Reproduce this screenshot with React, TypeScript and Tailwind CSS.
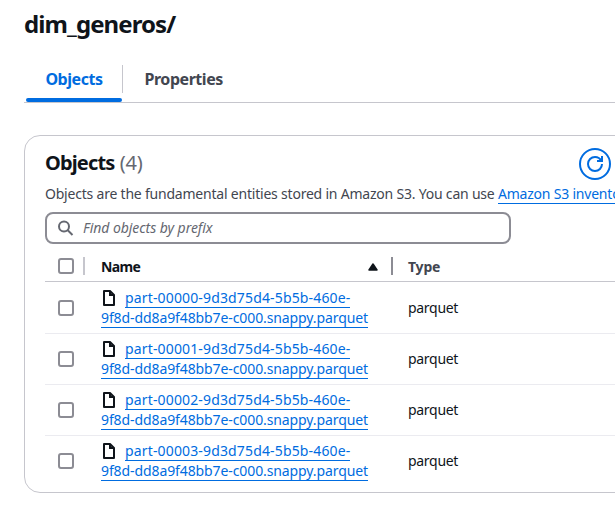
import React from "react";

const files = ["00000", "00001", "00002", "00003"];

function Checkbox() {
  return <span className="block h-4 w-4 shrink-0 rounded-[3px] border-2 border-[#8c8c94] bg-white" />;
}

function FileIcon() {
  return (
    <svg className="ml-[2px] mt-[1px] h-4 w-3 shrink-0" viewBox="0 0 12 16" fill="none" stroke="#0f141a" strokeWidth="2">
      <path d="M1 1H7L11 5V15H1Z" strokeLinejoin="round" />
      <path d="M7 1V5H11" />
    </svg>
  );
}

function Row({ id }: { id: string }) {
  return (
    <div className="flex h-[51px] items-center border-b border-[#ebebf0] pl-[13px] last:h-[50px] last:border-b-0">
      <Checkbox />
      <div className="ml-[27px] h-[39px] w-[307px] text-[14px] leading-5 text-[#006ce0]">
        <div className="flex h-5 items-start">
          <FileIcon />
          <span className="ml-[10px] h-[19px] whitespace-nowrap border-b border-[#006ce0] leading-[17px] tracking-[0.15px]">
            part-{id}-9d3d75d4-5b5b-460e-
          </span>
        </div>
        <div className="flex h-5">
          <span className="h-[19px] whitespace-nowrap border-b border-[#006ce0] leading-[17px] tracking-[-0.1px]">
            9f8d-dd8a9f48bb7e-c000.snappy.parquet
          </span>
        </div>
      </div>
      <span className="pb-[2px] text-[14px] tracking-[-0.3px] text-[#0f141a]">parquet</span>
    </div>
  );
}

export default function App() {
  return (
    <main className="h-[522px] w-[615px] overflow-hidden bg-white pl-6 font-['Noto_Sans','Open_Sans',sans-serif] text-[#0f141a]">
      <h1 className="h-[65px] pt-[9px] text-[24px] font-bold leading-[30px] tracking-[-0.92px]">dim_generos/</h1>
      <nav className="flex h-[38px] w-[640px] border-b border-[#c6c6cd]">
        <div className="ml-[2px] flex h-[37px] w-24 flex-col justify-between text-center text-[16px] font-bold text-[#006ce0]">
          <span className="h-7 leading-[29px] tracking-[-0.45px]">Objects</span>
          <span className="h-1 rounded-[2px] bg-[#006ce0]" />
        </div>
        <span className="h-7 w-px bg-[#c6c6cd]" />
        <span className="ml-[21.5px] h-7 text-[16px] font-bold leading-[29px] tracking-[-0.46px] text-[#424650]">Properties</span>
      </nav>
      <section className="mt-8 h-[358px] w-[640px] rounded-2xl border border-[#c6c6cd] pl-5">
        <header className="flex h-[49px] w-[566px] justify-between">
          <h2 className="pt-3 text-[20px] font-bold leading-[30px] tracking-[-0.85px]">
            Objects <span className="ml-px font-normal tracking-[-0.3px] text-[#656871]">(4)</span>
          </h2>
          <span className="mt-3 flex h-8 w-8 items-center justify-center rounded-full border-2 border-[#006ce0] text-[#006ce0]">
            <svg className="h-4 w-4" viewBox="0 0 16 16" fill="none" stroke="currentColor" strokeWidth="2">
              <path d="M15 8c0 3.87-3.13 7-7 7s-7-3.13-7-7 3.13-7 7-7c2.79 0 5.2 1.63 6.33 4" />
              <path d="M10 5H15V0" />
            </svg>
          </span>
        </header>
        <p className="h-[27px] whitespace-nowrap text-[14px] leading-[18px] tracking-[-0.21px] text-[#424650]">
          Objects are the fundamental entities stored in Amazon S3. You can use{" "}
          <span className="inline-block h-[19px] border-b border-[#006ce0] align-top text-[#006ce0]">Amazon S3 inventory</span>
        </p>
        <div className="flex h-8 w-[466px] items-center rounded-lg border-2 border-[#8c8c94] pl-[11px]">
          <svg className="h-4 w-4" viewBox="0 0 16 16" fill="none" stroke="#656871" strokeWidth="2">
            <circle cx="6" cy="6.5" r="5" />
            <path d="M9.5 10L14.5 15" />
          </svg>
          <span className="-mt-px ml-[9px] text-[14px] italic tracking-[-0.05px] text-[#656871]">Find objects by prefix</span>
        </div>
        <div className="mt-[5px] flex h-[33px] items-center border-b border-[#c6c6cd] pl-[13px] pt-[2px] text-[14px] font-bold">
          <Checkbox />
          <span className="ml-[9px] h-[18px] w-[2px] bg-[#c6c6cd]" />
          <span className="ml-4 w-[267px] tracking-[-0.65px]">Name</span>
          <svg className="mt-px h-2 w-[10px]" viewBox="0 0 10 8">
            <path d="M5 1L9 7H1Z" fill="#0f141a" stroke="#0f141a" strokeWidth="1.5" strokeLinejoin="round" />
          </svg>
          <span className="ml-[13px] h-[18px] w-[2px] bg-[#8c8c94]" />
          <span className="ml-[15px] tracking-[-0.2px] text-[#424650]">Type</span>
        </div>
        <div className="pt-px">
          {files.map((id) => <Row key={id} id={id} />)}
        </div>
      </section>
    </main>
  );
}
